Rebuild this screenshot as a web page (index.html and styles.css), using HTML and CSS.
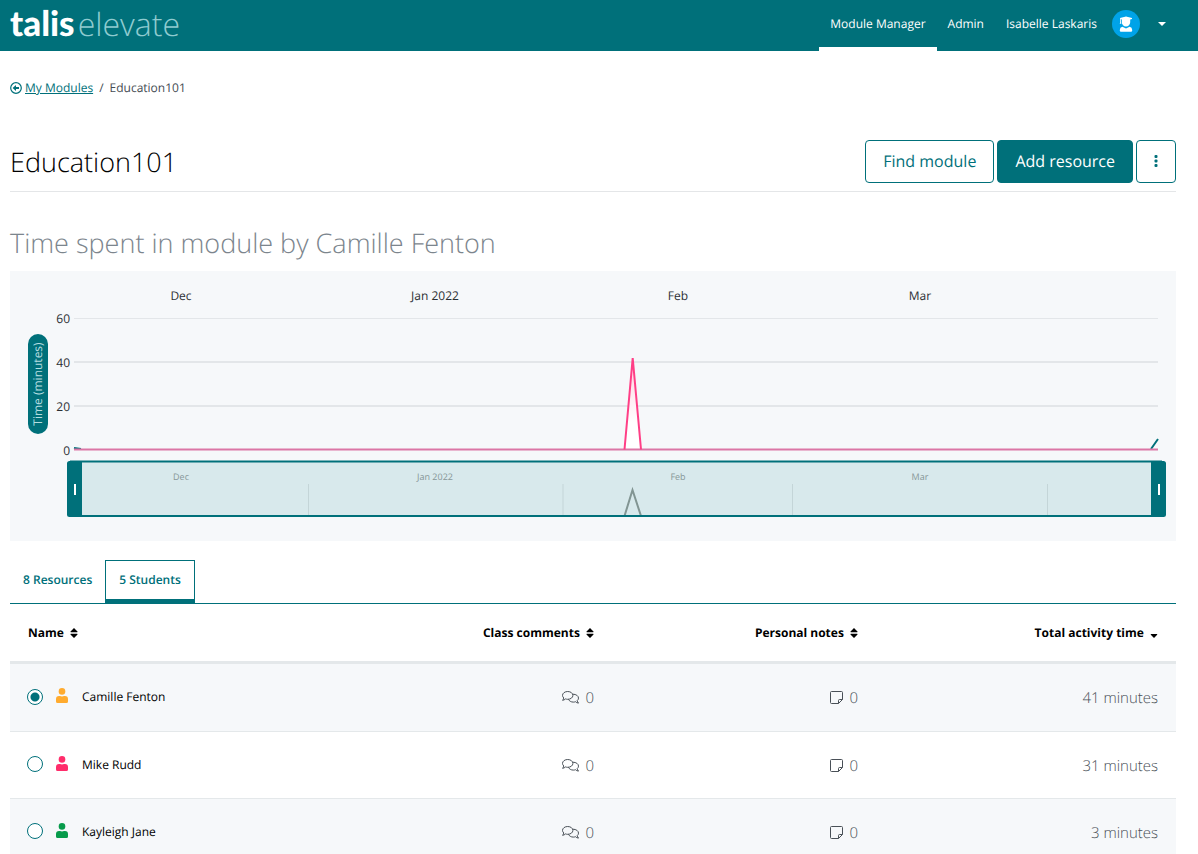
FILE: index.html
```
<!DOCTYPE html>
<html lang="en">
<head>
    <meta charset="utf-8">
    <title>Education101 - Talis Elevate</title>
    <link rel="stylesheet" href="styles.css">
</head>
<body>
    <!-- icons used more than once -->
    <svg class="sprite" aria-hidden="true">
        <symbol id="icon-user" viewBox="0 0 12 15">
            <circle cx="6" cy="3.400" r="3.300"/>
            <path d="M3 8h1q2 .9 4 0h1a3 3 0 0 1 3 3v2.500a1.500 1.500 0 0 1-1.500 1.500h-9A1.500 1.500 0 0 1 0 13.500V11a3 3 0 0 1 3-3z"/>
        </symbol>
        <symbol id="icon-sort" viewBox="0 0 8 10">
            <path d="M4 0l3.500 3.600q.3.700-.4.700H.9q-.7 0-.4-.7zM4 10L.5 6.400q-.3-.7.4-.7h6.200q.7 0 .4.700z"/>
        </symbol>
        <symbol id="icon-comments" viewBox="0 0 17 13">
            <path d="M1.800 7C.9 6.200.5 5.300.5 4.400.5 2.200 2.800.5 5.700.5s5.200 1.700 5.200 3.900-2.300 3.900-5.200 3.900c-.8 0-1.500-.1-2.200-.4C2.700 8.600 1.700 9.300.5 9.300c.6-.6 1.100-1.400 1.300-2.300z"/>
            <path d="M11 3.200c3 0 5.500 1.700 5.500 3.900 0 .9-.4 1.800-1.300 2.500.2.900.7 1.800 1.300 2.500-1.200 0-2.200-.6-3-1.400-.7.300-1.400.4-2.200.4-2.200 0-4.100-1.100-4.900-2.800"/>
        </symbol>
        <symbol id="icon-note" viewBox="0 0 13 13">
            <path d="M1.500.5h10q1 0 1 1v7l-4 4h-7q-1 0-1-1v-10q0-1 1-1zM12.500 8.500h-3q-1 0-1 1v3"/>
        </symbol>
    </svg>

    <header class="navbar">
        <a href="#" class="logo"><span class="logo-talis">talis</span><span class="logo-elevate">elevate</span></a>
        <nav class="nav-links">
            <a href="#" class="active">Module Manager</a>
            <a href="#">Admin</a>
            <a href="#" class="nav-user">Isabelle Laskaris
                <svg class="avatar" viewBox="0 0 28 28">
                    <circle cx="14" cy="14" r="14" fill="#00a3e8"/>
                    <path fill="#fff" d="M8 8l6-1.500L20 8v1l-1.800.5v2.800a4.200 4.200 0 0 1-8.400 0V9.600L9 9.300v2.900l.4 1.600H7.700l.5-1.600V9zM10.400 16.800l3.600 1.700 3.600-1.700q2.600.5 2.600 3.100v.7q0 1.200-1.200 1.200H9q-1.200 0-1.200-1.200v-.7q0-2.600 2.600-3.100z"/>
                </svg>
            </a>
            <button type="button" class="nav-toggle" aria-label="Account menu"></button>
        </nav>
    </header>

    <main class="container">
        <div class="breadcrumb">
            <svg class="back-icon" viewBox="0 0 12 12">
                <circle cx="6" cy="6" r="5.300" fill="none" stroke="#00707a" stroke-width="1.200"/>
                <path d="M2.600 6l3.400-3v2h3v2H6v2z" fill="#00707a"/>
            </svg>
            <a href="#">My Modules</a>
            <span class="divider">/</span>
            <span>Education101</span>
        </div>

        <div class="title-row">
            <h1>Education101</h1>
            <div class="button-group">
                <button type="button" class="btn">Find module</button>
                <button type="button" class="btn btn-primary">Add resource</button>
                <button type="button" class="btn btn-more" aria-label="More options">
                    <svg viewBox="0 0 4 14"><rect x=".5" y="1" width="3" height="3" rx="1"/><rect x=".5" y="5.500" width="3" height="3" rx="1"/><rect x=".5" y="10" width="3" height="3" rx="1"/></svg>
                </button>
            </div>
        </div>

        <h2>Time spent in module by Camille Fenton</h2>

        <svg class="chart" viewBox="0 0 1166 270" role="img" aria-label="Time spent in module">
            <defs>
                <linearGradient id="peak" x1="0" y1="0" x2="0" y2="1">
                    <stop offset="0" stop-color="#ffd0df"/>
                    <stop offset="0.7" stop-color="#fff"/>
                </linearGradient>
            </defs>
            <g class="months">
                <text x="171" y="29">Dec</text>
                <text x="425" y="29">Jan 2022</text>
                <text x="668" y="29">Feb</text>
                <text x="910" y="29">Mar</text>
            </g>
            <g class="scale">
                <text x="60" y="52">60</text>
                <text x="60" y="96">40</text>
                <text x="60" y="140">20</text>
                <text x="60" y="184">0</text>
            </g>
            <path class="grid" d="M64 47.500H1148"/>
            <path class="grid grid-thick" d="M64 91H1148M64 135H1148"/>
            <rect x="18" y="63" width="20" height="100" rx="10" fill="#00707a"/>
            <text class="axis-title" transform="translate(32 113) rotate(-90)">Time (minutes)</text>

            <!-- main series -->
            <path class="line-class" d="M64 177l7 1M1141 178l7-10"/>
            <path d="M614.500 179L622.500 88 631 179z" fill="url(#peak)"/>
            <path class="line-base" d="M64 178.500H1148"/>
            <path class="line-student" d="M614.500 178.500L622.700 87l8.300 91.500"/>

            <!-- range selector -->
            <rect x="65" y="191" width="1084" height="54" fill="#d8e9ec"/>
            <path class="range-grid" d="M298.500 213v32M553 213v32M782.500 213v32M1037.500 213v32"/>
            <g class="range-months">
                <text x="171" y="209">Dec</text>
                <text x="425" y="209">Jan 2022</text>
                <text x="668" y="209">Feb</text>
                <text x="910" y="209">Mar</text>
            </g>
            <path class="range-line" d="M614.500 245l8-26 8.500 26"/>
            <path class="range-border" d="M60 190.500H1152M60 245H1152"/>
            <path class="handle" d="M72 190H59.500q-2.500 0-2.500 2.500v51q0 2.500 2.500 2.500H72zM1141 190h12.500q2.500 0 2.500 2.500v51q0 2.500-2.500 2.500H1141z"/>
            <path class="grip" d="M65 213v11M1149 213v11"/>
        </svg>

        <div class="tabs" role="tablist">
            <button type="button" class="tab" role="tab">8 Resources</button>
            <button type="button" class="tab tab-active" role="tab" aria-selected="true">5 Students</button>
        </div>

        <table class="students">
            <thead>
                <tr>
                    <th class="col-name">Name <svg class="sort"><use href="#icon-sort"/></svg></th>
                    <th class="col-comments">Class comments <svg class="sort"><use href="#icon-sort"/></svg></th>
                    <th class="col-notes">Personal notes <svg class="sort"><use href="#icon-sort"/></svg></th>
                    <th>Total activity time <svg class="sort" viewBox="0 0 8 10"><path d="M4 10L.8 6.800q-.3-.7.4-.7h5.600q.7 0 .4.700z"/></svg></th>
                </tr>
            </thead>
            <tbody>
                <tr>
                    <td>
                        <label class="student">
                            <input type="radio" name="student" checked>
                            <svg class="user user-orange"><use href="#icon-user"/></svg>
                            Camille Fenton
                        </label>
                    </td>
                    <td><svg class="comments"><use href="#icon-comments"/></svg>0</td>
                    <td><svg class="note"><use href="#icon-note"/></svg>0</td>
                    <td>41 minutes</td>
                </tr>
                <tr>
                    <td>
                        <label class="student">
                            <input type="radio" name="student">
                            <svg class="user user-pink"><use href="#icon-user"/></svg>
                            Mike Rudd
                        </label>
                    </td>
                    <td><svg class="comments"><use href="#icon-comments"/></svg>0</td>
                    <td><svg class="note"><use href="#icon-note"/></svg>0</td>
                    <td>31 minutes</td>
                </tr>
                <tr>
                    <td>
                        <label class="student">
                            <input type="radio" name="student">
                            <svg class="user user-green"><use href="#icon-user"/></svg>
                            Kayleigh Jane
                        </label>
                    </td>
                    <td><svg class="comments"><use href="#icon-comments"/></svg>0</td>
                    <td><svg class="note"><use href="#icon-note"/></svg>0</td>
                    <td>3 minutes</td>
                </tr>
            </tbody>
        </table>
    </main>
</body>
</html>
```
FILE: styles.css
```
* {
    box-sizing: border-box;
}

body {
    margin: 0;
    font-family: "Open Sans", sans-serif;
    font-size: 12px;
    color: #000;
    background: #fff;
    text-rendering: geometricPrecision;
}

button {
    font-family: inherit;
    text-rendering: inherit;
    cursor: pointer;
}

.sprite {
    display: none;
}

/* top bar */
.navbar {
    display: flex;
    justify-content: space-between;
    height: 51px;
    padding: 0 22px 0 10px;
    background: #00707a;
}

.logo {
    display: flex;
    align-items: baseline;
    gap: 3px;
    line-height: 46px;
    color: #fff;
    text-decoration: none;
}

.logo-talis {
    font-family: Lato, sans-serif;
    font-size: 35px;
    font-weight: 900;
}

.logo-elevate {
    font-size: 32px;
    font-weight: 300;
    color: #8fcbd0;
}

.nav-links {
    display: flex;
}

.nav-links a {
    display: flex;
    align-items: center;
    padding: 0 11px;
    border-bottom: 4px solid transparent;
    color: #fff;
    font-weight: 500;
    text-decoration: none;
}

.nav-links .active {
    border-bottom-color: #fff;
}

.nav-user {
    gap: 15px;
}

.avatar {
    width: 28px;
    height: 28px;
}

.nav-toggle {
    display: flex;
    align-items: center;
    padding: 0 10px 4px 7px;
    border: none;
    background: none;
}

.nav-toggle::after {
    content: "";
    border-top: 4px solid #fff;
    border-left: 4px solid transparent;
    border-right: 4px solid transparent;
}

.container {
    padding: 0 22px 0 10px;
}

.breadcrumb {
    display: flex;
    align-items: center;
    padding-top: 28px;
    line-height: 18px;
    color: #444b52;
}

.back-icon {
    width: 12px;
    height: 12px;
    margin-right: 3px;
}

.breadcrumb a {
    color: #00707a;
}

.divider {
    padding: 0 6px;
}

.title-row {
    display: flex;
    justify-content: space-between;
    align-items: center;
    margin-top: 43px;
    padding-bottom: 8px;
    border-bottom: 1px solid #e4e6e8;
}

h1, h2 {
    margin: 0;
    font-size: 27px;
    font-weight: 300;
    line-height: 40px;
}

h2 {
    margin: 31px 0 8px;
    color: #7c858d;
}

.button-group {
    display: flex;
    gap: 3px;
}

.btn {
    height: 43px;
    padding: 0 17px 1px;
    border: 1px solid #00707a;
    border-radius: 4px;
    background: #fff;
    color: #00707a;
    font-size: 16px;
}

.btn-primary {
    background: #00707a;
    color: #fff;
}

.btn-more svg {
    display: block;
    width: 4px;
    height: 14px;
    fill: #00707a;
}

/* chart */
.chart {
    display: block;
    width: 100%;
    background: #f6f8fa;
    font-size: 12px;
}

.months text, .range-months text, .axis-title {
    text-anchor: middle;
}

.months, .scale {
    fill: #2b2f33;
}

.scale text {
    text-anchor: end;
}

.axis-title {
    fill: #b5dde0;
}

.grid {
    stroke: #e3e6e9;
}

.grid-thick {
    stroke-width: 2;
}

.line-class {
    fill: none;
    stroke: #00707a;
    stroke-width: 2;
}

.line-base {
    stroke: #db76a5;
    stroke-width: 2;
}

.line-student {
    fill: none;
    stroke: #ff3f86;
    stroke-width: 2;
}

.range-grid {
    stroke: #c4d5d8;
}

.range-months {
    fill: #879798;
    font-size: 9px;
}

.range-line {
    fill: none;
    stroke: #829593;
    stroke-width: 2;
}

.range-border {
    stroke: #00707a;
    stroke-width: 2;
}

.handle {
    fill: #00707a;
}

.grip {
    stroke: #fff;
    stroke-width: 2;
}

/* tabs */
.tabs {
    display: flex;
    margin-top: 19px;
    border-bottom: 1px solid #00707a;
}

.tab {
    height: 43px;
    padding: 0 13px 4px;
    border: 0 solid #00707a;
    background: none;
    color: #00707a;
    font-size: 12px;
    font-weight: 600;
}

.tab-active {
    border-width: 1px 1px 4px;
    padding-bottom: 1px;
}

/* students */
.students {
    width: 100%;
    border-spacing: 0;
    table-layout: fixed;
}

.students th {
    height: 60px;
    padding: 0 18px;
    border-bottom: 3px solid #e4e8ea;
    text-align: right;
    font-weight: 700;
    white-space: nowrap;
}

.students .col-name {
    width: 338px;
    text-align: left;
}

.col-comments {
    width: 264px;
}

.col-notes {
    width: 264px;
}

.sort {
    width: 8px;
    height: 10px;
    margin-left: 3px;
    vertical-align: -1px;
}

.students td {
    height: 67px;
    padding: 1px 18px 0;
    border-bottom: 1px solid #e4e8ea;
    text-align: right;
    font-size: 15px;
    font-weight: 300;
    color: #495057;
}

.students tbody tr:first-child td {
    height: 68px;
}

.students td:first-child {
    padding: 0 17px 2px;
}

.students tbody tr:nth-child(odd) {
    background: #f6f8fa;
}

.student {
    display: flex;
    align-items: center;
    color: #000;
    font-size: 12px;
    font-weight: 400;
}

.student input {
    appearance: none;
    width: 16px;
    height: 16px;
    margin: 0 13px 0 0;
    border: 1px solid #00707a;
    border-radius: 50%;
    background: #fff;
}

.student input:checked {
    background: radial-gradient(circle, #00707a 4px, #fff 5px);
}

.user {
    width: 12px;
    height: 15px;
    margin: 0 14px 2px 0;
}

.user-orange {
    fill: #ffab2e;
}

.user-pink {
    fill: #ff2d6b;
}

.user-green {
    fill: #079b4b;
}

.comments, .note {
    height: 13px;
    margin-right: 6px;
    vertical-align: -1px;
    fill: none;
    stroke: #495057;
}

.comments {
    width: 17px;
}

.note {
    width: 13px;
}
```
